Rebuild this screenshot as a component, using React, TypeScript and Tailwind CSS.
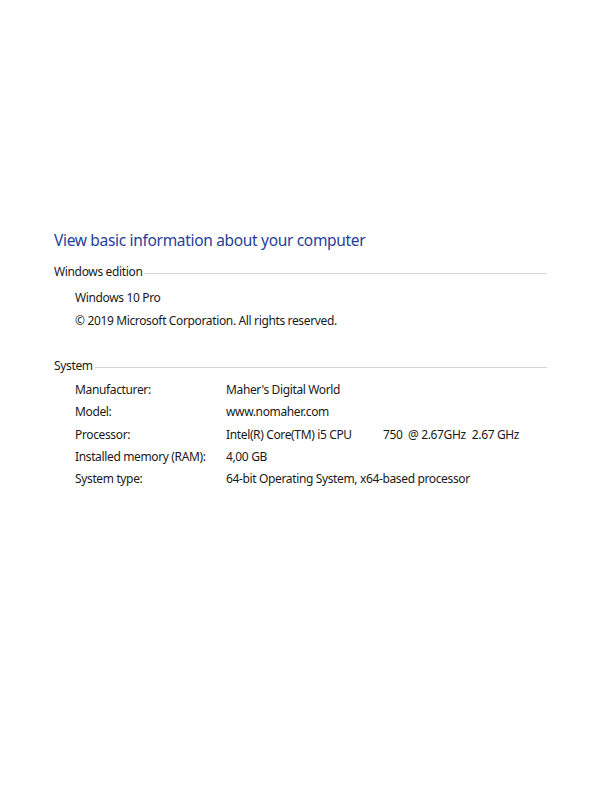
const rows: [string, string][] = [
  ['Manufacturer:', "Maher's Digital World"],
  ['Model:', 'www.nomaher.com'],
  ['Processor:', ''],
  ['Installed memory (RAM):', '4,00 GB'],
  ['System type:', '64-bit Operating System, x64-based processor'],
];

const SectionHeader = ({ title }: { title: string }) => (
  <div className="flex items-center h-[20px]">
    <span className="pr-[2px] text-[12px] tracking-[-0.35px] text-[#1a1a1a]">{title}</span>
    <div className="flex-1 h-px bg-[#d5d5d5] mt-[2px]" />
  </div>
);

export default function App() {
  return (
    <div
      className="w-[597px] h-[800px] bg-white pl-[54px] pr-[50px] pt-[229px] text-[#1a1a1a] antialiased"
      style={{ fontFamily: '"Noto Sans", "Open Sans", sans-serif' }}
    >
      <h1 className="text-[15.5px] leading-[22px] text-[#25409a] tracking-[-0.32px]">
        View basic information about your computer
      </h1>

      <div className="mt-[11px]">
        <SectionHeader title="Windows edition" />
        <div className="pl-[21px] mt-[4px] text-[12px] leading-[23px] tracking-[-0.36px]">
          <div>Windows 10 Pro</div>
          <div>© 2019 Microsoft Corporation. All rights reserved.</div>
        </div>
      </div>

      <div className="mt-[24px]">
        <SectionHeader title="System" />
        <div className="pl-[21px] mt-[3px] text-[12px] leading-[22.3px] tracking-[-0.36px]">
          {rows.map(([label, value]) => (
            <div key={label} className="flex">
              <div className="w-[151px] shrink-0">{label}</div>
              {label === 'Processor:' ? (
                <div className="flex whitespace-pre">
                  <span className="w-[157px] shrink-0">Intel(R) Core(TM) i5 CPU</span>
                  <span>750  @ 2.67GHz</span>
                  <span className="ml-[6px]">2.67 GHz</span>
                </div>
              ) : (
                <div>{value}</div>
              )}
            </div>
          ))}
        </div>
      </div>
    </div>
  );
}
